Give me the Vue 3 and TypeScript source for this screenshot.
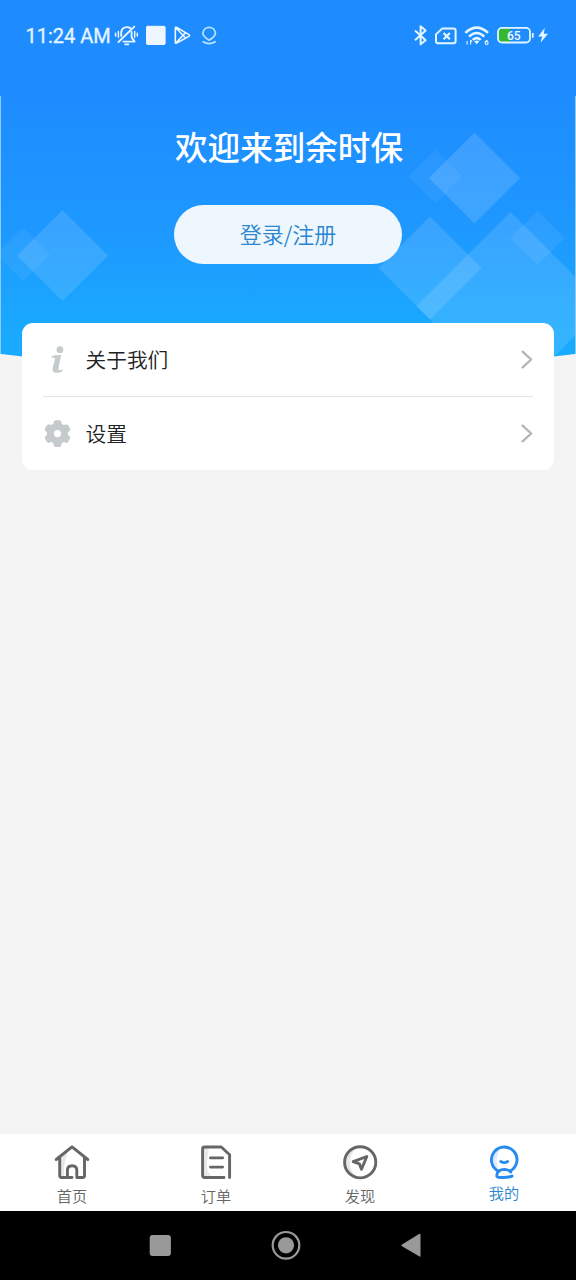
<script setup lang="ts">
interface Diamond { x: number; y: number; r: number; o: number }

const diamonds: Diamond[] = [
  { x: 23, y: 254.5, r: 27, o: 0.06 },
  { x: 62.5, y: 255.5, r: 45.5, o: 0.12 },
  { x: 435.5, y: 176.5, r: 27, o: 0.05 },
  { x: 474.5, y: 178, r: 45.5, o: 0.14 },
  { x: 430, y: 268, r: 51.5, o: 0.12 },
  { x: 510.5, y: 306, r: 94, o: 0.12 },
  { x: 537.5, y: 238, r: 27, o: 0.07 },
]

const points = (d: Diamond): string =>
  `${d.x},${d.y - d.r} ${d.x + d.r},${d.y} ${d.x},${d.y + d.r} ${d.x - d.r},${d.y}`

const rows: { id: string; label: string }[] = [
  { id: 'about', label: '关于我们' },
  { id: 'settings', label: '设置' },
]

const tabs: { id: string; label: string }[] = [
  { id: 'home', label: '首页' },
  { id: 'orders', label: '订单' },
  { id: 'discover', label: '发现' },
  { id: 'mine', label: '我的' },
]
const active = 'mine'
</script>

<template>
  <div class="screen">
    <svg class="backdrop" width="576" height="370" viewBox="0 0 576 370">
      <defs>
        <linearGradient id="sky" x1="0" y1="96" x2="0" y2="362" gradientUnits="userSpaceOnUse">
          <stop offset="0" stop-color="#1e8cff" />
          <stop offset="0.5" stop-color="#1e98ff" />
          <stop offset="0.85" stop-color="#1aa8ff" />
          <stop offset="1" stop-color="#19acff" />
        </linearGradient>
        <clipPath id="dome"><path d="M1 0H575V354Q288 390 1 354Z" /></clipPath>
      </defs>
      <rect width="576" height="96" fill="#1e8cff" />
      <rect y="96" width="576" height="258" fill="#8cccf9" />
      <g clip-path="url(#dome)">
        <rect width="576" height="370" fill="url(#sky)" />
        <polygon v-for="(d, i) in diamonds" :key="i" :points="points(d)" fill="#fff" :fill-opacity="d.o" />
      </g>
    </svg>

    <header class="status">
      <span class="clock">11:24 AM</span>
      <svg class="left-icons" width="106" height="26" viewBox="114 22 106 26" fill="none" stroke="#e9f5ff" stroke-width="1.9" stroke-linecap="round" stroke-linejoin="round">
        <path d="M121.2 36V33.5C121.2 29.8 123.2 27.4 126.5 27.1C128.1 27 129.2 27.4 130.2 28.1M131.6 32V37.4L134.6 41.6H123.5M118.5 42L134.3 26.6M125.2 44.4H128.3" />
        <path d="M115.6 33.3V36M118.4 31.4V37.2M134.7 31.4V37.2M137.3 33.3V36" stroke-width="1.5" />
        <rect x="146.5" y="26.3" width="18.6" height="18.2" rx="1" fill="#eef6ff" stroke="#eef6ff" stroke-width="1" />
        <path d="M175.3 28.1V42.3Q175.3 43.8 176.8 43L189 36.2Q190.2 35.4 189 34.6L176.8 27.5Q175.3 26.8 175.3 28.1ZM175.8 27.8L185.6 38M175.8 43L185.6 32.6" stroke-width="1.6" />
        <path d="M209.1 40.2C206 38.2 202.9 36.3 202.9 32.9A6.3 6.3 0 0 1 215.4 32.9C215.4 36.3 212.2 38.2 209.1 40.2ZM203.2 41.7Q209.1 45.5 215.2 41.7" stroke-width="1.7" stroke="#b9e4ff" />
      </svg>
      <svg class="right-icons" width="138" height="28" viewBox="412 22 138 28" fill="none" stroke="#e4f6ff" stroke-width="1.8" stroke-linejoin="round">
        <path d="M415 30.5L425.6 40.2L420.6 44.3V26.3L425.6 30.5L415 40.3" stroke-width="2" />
        <path d="M442.3 28.4H453.6Q455.6 28.4 455.6 30.4V41.3Q455.6 43.3 453.6 43.3H438Q436 43.3 436 41.3V34.4Z" stroke-width="2" />
        <path d="M443.6 33L449.8 39.3M449.8 33L443.6 39.3" stroke-width="2.2" />
        <path d="M465.4 32.8Q476.7 22.5 488 32.8M469.1 36.6Q476.7 29.4 484.3 36.6M472.7 39.9Q476.7 36.3 480.7 39.9" stroke-width="2.5" />
        <path d="M474.2 41.5Q476.7 39.4 479.2 41.5L476.7 44.2Z" fill="#e4f6ff" stroke="none" />
        <path d="M467.1 41V44.6M470.6 44.5V40.2L472 41.6" stroke-width="1.1" />
        <text x="486.5" y="45" class="wifi-gen">6</text>
        <path d="M502 29H510V42H502Q499 42 499 39V32Q499 29 502 29Z" fill="#37b82f" stroke="none" />
        <rect x="498" y="27.9" width="32" height="14.6" rx="4" stroke-width="1.8" />
        <path d="M532.8 33V37.7" stroke-width="1.8" />
        <text x="513.8" y="40" class="battery">65</text>
        <path d="M544.8 27.8L538.2 36.6H542.1L540.6 42.8L548 33.8H543.8Z" fill="#e4f6ff" stroke="none" />
      </svg>
    </header>

    <main class="content">
      <h1 class="title">欢迎来到余时保</h1>
      <button class="login" type="button">登录/注册</button>
      <section class="card">
        <div v-for="row in rows" :key="row.id" class="row">
          <svg v-if="row.id === 'about'" class="row-icon" width="28" height="30" viewBox="0 0 28 30" fill="#c5cacd">
            <circle cx="16.9" cy="4.7" r="3.4" />
            <path d="M8.6 11.3Q12.6 9.9 18.2 10.1L15.3 23.6Q15 25.5 17.2 25L19.7 24.2Q19.5 27.8 14.1 27.8C10 27.8 8.9 25.7 9.8 22.4L12 14.3Q12.5 12.3 8.6 12.6Z" />
          </svg>
          <svg v-else class="row-icon" width="28" height="30" viewBox="0 0 28 30">
            <g fill="#c5cacd">
              <circle cx="14.5" cy="14.6" r="10.6" />
              <rect v-for="a in [0, 60, 120]" :key="a" x="10.5" y="1.2" width="8" height="26.8" rx="2.8" :transform="`rotate(${a} 14.5 14.6)`" />
            </g>
            <circle cx="14.5" cy="14.6" r="3.6" fill="#fff" />
          </svg>
          <span class="row-label">{{ row.label }}</span>
          <svg class="chevron" width="14" height="20" viewBox="0 0 14 20" fill="none" stroke="#b5b5b5" stroke-width="2.3" stroke-linecap="round" stroke-linejoin="round">
            <path d="M3.6 1.6L12.2 9.5L3.6 17.4" />
          </svg>
        </div>
      </section>
    </main>

    <nav class="tabs">
      <div v-for="tab in tabs" :key="tab.id" class="tab" :class="{ active: tab.id === active }">
        <svg v-if="tab.id === 'home'" width="40" height="40" viewBox="0 0 40 40" class="tab-icon">
          <path class="shade" d="M8 15L16 9L12 24V34H8Z" />
          <path d="M4.2 17.5L20 4.9L35.8 17.5M7.7 16V33.6Q7.7 35.5 9.5 35.5H20M15.4 34.3V28.3Q15.4 23.7 20.1 23.7Q24.8 23.7 24.8 28.3V35.5H30.8Q32.5 35.5 32.5 33.6V16" />
        </svg>
        <svg v-else-if="tab.id === 'orders'" width="40" height="40" viewBox="0 0 40 40" class="tab-icon">
          <path class="shade" d="M7 5H13L11 20Q10 30 16 35H7Z" />
          <path d="M28 35.5H8.5Q6.6 35.5 6.6 33.6V7Q6.6 5 8.5 5H25.3L33.6 12.7V35.6M14.5 15.9H26.6M14.5 25.1H26.6" />
        </svg>
        <svg v-else-if="tab.id === 'discover'" width="40" height="40" viewBox="0 0 40 40" class="tab-icon">
          <path class="shade" d="M17 5A15.5 15.5 0 0 0 17 35Q10 29 10 21Q10 12 17 5Z" />
          <circle cx="20.2" cy="20.3" r="15.6" />
          <path d="M13.2 19.7L26.8 14.5L21.5 27.3L19.4 21.9Z" />
        </svg>
        <svg v-else width="40" height="40" viewBox="0 0 40 40" class="tab-icon">
          <path class="shade" d="M17 5Q6 9 8 21Q10 27 12.5 28L14 25Q10 18 17 5Z" />
          <path d="M14.4 29.2A12.8 12.8 0 1 1 26.4 29M16.8 19.5Q20.2 21.7 23.6 19.5" />
          <path d="M28 34.1Q24 35.9 14.4 35.3Q12.5 35.1 12.8 33.2C13.3 29 16.9 27.4 20.6 27.4Q24.3 27.5 26.8 30" />
        </svg>
        <span class="tab-label">{{ tab.label }}</span>
      </div>
    </nav>

    <footer class="system">
      <svg width="576" height="69" viewBox="0 0 576 69">
        <rect x="149.7" y="24" width="21.2" height="21" rx="3" fill="#999" />
        <circle cx="286" cy="34.3" r="13.3" fill="none" stroke="#999" stroke-width="2.2" />
        <circle cx="286" cy="34.3" r="8.1" fill="#999" />
        <path d="M402 33.5L419.5 22.8Q420.5 22.4 420.5 23.6V44.8Q420.5 46 419.5 45.5L402 35.2Q400.8 34.3 402 33.5Z" fill="#999" />
      </svg>
    </footer>
  </div>
</template>

<style>
body { background: #f4f4f4; }
</style>

<style scoped>
.screen {
  position: relative;
  display: flex;
  flex-direction: column;
  width: 576px;
  height: 1280px;
  overflow: hidden;
  background: #f4f4f4;
  font-family: "Noto Sans CJK SC DemiLight", "Noto Sans CJK SC", sans-serif;
  font-weight: 350;
}
.backdrop { position: absolute; top: 0; left: 0; }
.status {
  position: relative;
  display: flex;
  align-items: flex-start;
  height: 96px;
  box-sizing: border-box;
  padding: 22px 26px 0 25.5px;
}
.clock {
  width: 88.5px;
  font: 400 20px/28px Roboto, sans-serif;
  color: #e6f5ff;
  white-space: nowrap;
  -webkit-text-stroke: 0.3px #e6f5ff;
}
.right-icons { margin-left: auto; }
.wifi-gen { font: 700 7.5px Roboto, sans-serif; fill: #e4f6ff; stroke: none; text-anchor: middle; }
.battery { font: 500 12px Roboto, sans-serif; fill: #f3fbff; stroke: none; text-anchor: middle; }
.content {
  position: relative;
  flex: 1;
  display: flex;
  flex-direction: column;
  align-items: center;
}
.title {
  margin: 27px 0 0;
  padding-left: 2px;
  font-family: "Noto Sans CJK SC", sans-serif;
  font-size: 32.6px;
  line-height: 46px;
  font-weight: 500;
  color: #fff;
}
.login {
  width: 228px;
  height: 59px;
  margin: 36px 0 0;
  padding: 0 0 2px;
  border: 0;
  border-radius: 30px;
  background: #eef7fe;
  color: #2a86d1;
  font-family: inherit;
  font-size: 22px;
  font-weight: 350;
  line-height: 57px;
}
.card {
  width: 532px;
  height: 147px;
  box-sizing: border-box;
  margin-top: 59px;
  padding: 0 21px;
  border-radius: 11px;
  background: #fff;
}
.row { display: flex; align-items: center; height: 73px; }
.row + .row { border-top: 1px solid #e3e3e3; }
.row-icon { flex: none; }
.row-label {
  flex: 1;
  margin-left: 14.5px;
  padding-bottom: 1px;
  font-size: 20.7px;
  line-height: 30px;
  color: #222;
}
.tabs {
  display: flex;
  height: 77px;
  background: #fff;
  position: relative;
}
.tab {
  flex: 1;
  display: flex;
  flex-direction: column;
  align-items: center;
  padding-top: 8px;
  color: #666;
}
.tab-icon {
  flex: none;
  fill: none;
  stroke: currentColor;
  stroke-width: 2.9;
  stroke-linecap: round;
  stroke-linejoin: round;
}
.tab-icon .shade { fill: #e8e8e8; stroke: none; }
.tab-label { margin-top: 3px; font-size: 15.2px; line-height: 20px; }
.active { color: #268bee; }
.active .tab-icon .shade { fill: #dceafb; }
.active .tab-label { margin-top: 0; color: #2a86cf; }
.system { position: relative; height: 69px; background: #000; }
.system svg { display: block; }
</style>
